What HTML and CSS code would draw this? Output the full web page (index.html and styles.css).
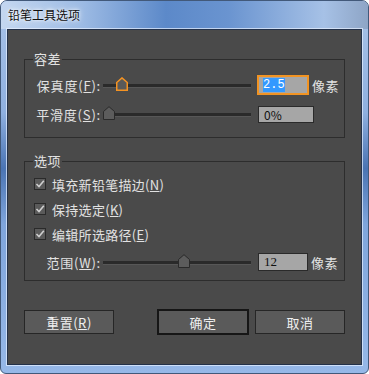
FILE: index.html
```html
<!DOCTYPE html>
<html>
<head>
  <title>铅笔工具选项</title>
  <link rel="stylesheet" href="styles.css">
</head>
<body>
  <div class="window">
    <div class="titlebar">铅笔工具选项</div>
    <div class="client">

      <fieldset class="group group-tol">
        <legend>容差</legend>
        <div class="row row-fid">
          <label class="lbl">保真度(<u>F</u>):</label>
          <div class="slider">
            <div class="track"></div>
            <svg class="thumb" style="left: 13px" viewBox="0 0 12 14"><path class="thumb-on" d="M0.75 13.25 V5.5 L6 0.9 L11.25 5.5 V13.25 Z"/></svg>
          </div>
          <div class="field field-focus"><span class="sel">2.5</span></div>
          <span class="unit">像素</span>
        </div>
        <div class="row row-smooth">
          <label class="lbl">平滑度(<u>S</u>):</label>
          <div class="slider">
            <div class="track"></div>
            <svg class="thumb" style="left: 0px" viewBox="0 0 12 14"><path d="M0.5 13.5 V5.5 L6 0.7 L11.5 5.5 V13.5 Z"/></svg>
          </div>
          <div class="field field-wide">0%</div>
        </div>
      </fieldset>

      <fieldset class="group group-opt">
        <legend>选项</legend>
        <div class="check">
          <span class="box"><svg viewBox="0 0 10 10"><path d="M1.5 5 L4 7.5 L8.8 1.8"/></svg></span>
          <span>填充新铅笔描边(<u>N</u>)</span>
        </div>
        <div class="check">
          <span class="box"><svg viewBox="0 0 10 10"><path d="M1.5 5 L4 7.5 L8.8 1.8"/></svg></span>
          <span>保持选定(<u>K</u>)</span>
        </div>
        <div class="check">
          <span class="box"><svg viewBox="0 0 10 10"><path d="M1.5 5 L4 7.5 L8.8 1.8"/></svg></span>
          <span>编辑所选路径(<u>E</u>)</span>
        </div>
        <div class="row row-range">
          <label class="lbl">范围(<u>W</u>):</label>
          <div class="slider">
            <div class="track"></div>
            <svg class="thumb" style="left: 75px" viewBox="0 0 12 14"><path d="M0.5 13.5 V5.5 L6 0.7 L11.5 5.5 V13.5 Z"/></svg>
          </div>
          <div class="field field-num">12</div>
          <span class="unit">像素</span>
        </div>
      </fieldset>

      <div class="buttons">
        <button class="btn">重置(<u>R</u>)</button>
        <button class="btn btn-default">确定</button>
        <button class="btn btn-cancel">取消</button>
      </div>

    </div>
  </div>
</body>
</html>
```

FILE: styles.css
```css
/* dialog in an aero window frame */

body {
  margin: 0;
  background: #ffffff;
  font-family: "Noto Sans CJK SC", sans-serif;
}

.window {
  width: 369px;
  height: 374px;
  box-sizing: border-box;
  border: 1px solid #42597a;
  border-radius: 7px 7px 6px 6px;
  overflow: hidden;
  background: linear-gradient(180deg, #a9c3e8 0%, #8fb0e0 30%, #4a74b4 45%, #7fa5dc 60%, #96b8e8 100%);
}

.titlebar {
  height: 28px;
  padding-left: 7px;
  font-size: 12px;
  line-height: 28px;
  color: #101010;
  text-shadow: 0 0 6px #ffffff, 0 0 3px #ffffff;
  background: linear-gradient(90deg, #c4d7f0 0%, #9dbbe4 22%, #5c89c9 45%, #6a94d0 62%, #a6c1e6 88%, #8ea5c6 100%);
}

.client {
  margin: 0 6px;
  height: 336px;
  box-sizing: border-box;
  border: 1px solid #24324a;
  box-shadow: 0 0 0 1px rgba(232, 241, 255, 0.7);
  background: #4a4a4a;
  color: #e2e2e2;
  font-size: 13px;
}

.group {
  width: 321px;
  box-sizing: border-box;
  margin: 0 0 0 16px;
  border: 1px solid #2d2d2d;
  min-width: 0;
}

.group legend {
  padding: 0 1px;
  font-size: 13px;
  line-height: 14px;
  letter-spacing: 0.5px;
  color: #e2e2e2;
}

.group-tol {
  margin-top: 22px;
  padding: 9px 0 14px 8px;
}

.group-opt {
  margin-top: 16px;
  padding: 4px 0 9px 8px;
}

.row {
  display: flex;
  align-items: center;
}

.row-fid {
  height: 20px;
}

.row-smooth {
  height: 18px;
  margin-top: 10px;
}

.row-range {
  height: 18px;
  margin-top: 7px;
}

.lbl {
  width: 68px;
  text-align: right;
  white-space: nowrap;
  letter-spacing: 0.8px;
}

.slider {
  position: relative;
  width: 148px;
  height: 100%;
  margin-left: 2px;
  display: flex;
  align-items: center;
}

.track {
  flex: 1;
  height: 3px;
  background: #2a2a2a;
  box-shadow: 0 1px 0 #575757;
}

.thumb {
  position: absolute;
  top: 50%;
  margin-top: -8px;
  width: 12px;
  height: 14px;
}

.thumb path {
  fill: #5c5c5c;
  stroke: #2a2a2a;
  stroke-width: 1;
}

.thumb path.thumb-on {
  fill: #595959;
  stroke: #f59322;
  stroke-width: 1.5;
}

.field {
  box-sizing: border-box;
  margin-left: 7px;
  padding-left: 5px;
  background: #a6a6a6;
  border: 1px solid #2a2a2a;
  color: #111111;
  font-size: 12px;
  line-height: 15px;
}

.field-focus {
  width: 52px;
  height: 20px;
  margin-left: 6px;
  padding-left: 4px;
  padding-top: 1px;
  border: 2px solid #f29423;
  font-family: "Liberation Mono", monospace;
}

.sel {
  background: #3399ff;
  color: #ffffff;
}

.field-wide {
  width: 56px;
  height: 17px;
}

.field-num {
  width: 50px;
  height: 18px;
  font-family: "Liberation Serif", serif;
  font-size: 13px;
}

.unit {
  margin-left: 3px;
  letter-spacing: 0.5px;
}

.check {
  display: flex;
  align-items: center;
  height: 24px;
  letter-spacing: 0.3px;
}

.check + .check {
  margin-top: 1px;
}

.box {
  width: 12px;
  height: 12px;
  box-sizing: border-box;
  margin: 0 6px 0 1px;
  border: 1px solid #2a2a2a;
  background: #5a5a5a;
  display: flex;
}

.box svg {
  width: 10px;
  height: 10px;
}

.box path {
  fill: none;
  stroke: #cfcfcf;
  stroke-width: 1.6;
}

.buttons {
  display: flex;
  align-items: center;
  height: 26px;
  margin: 28px 0 0 16px;
}

.btn {
  width: 90px;
  height: 24px;
  box-sizing: border-box;
  padding: 0;
  border: 1px solid #262626;
  background: #5a5a5a;
  color: #f0f0f0;
  font-family: "Noto Sans CJK SC", sans-serif;
  font-size: 13px;
  letter-spacing: 0.5px;
}

.btn-default {
  width: 92px;
  height: 26px;
  margin-left: 43px;
  border: 2px solid #161616;
}

.btn-cancel {
  margin-left: 6px;
}
```
